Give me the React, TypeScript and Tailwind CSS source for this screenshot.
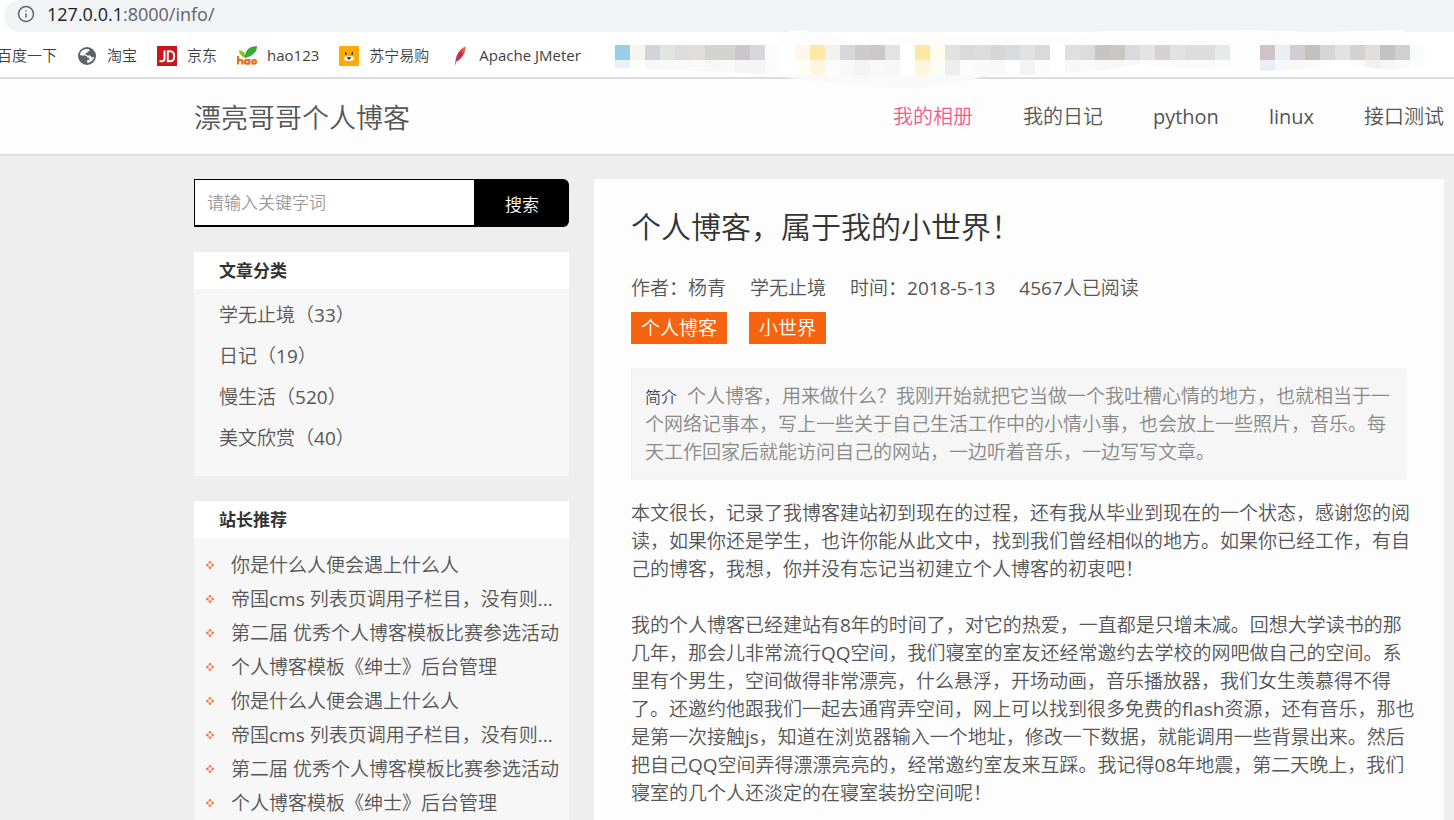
import React from 'react'
import { Info } from 'lucide-react'

interface Category {
  name: string
  count: number
}

const categories: Category[] = [
  { name: '学无止境', count: 33 },
  { name: '日记', count: 19 },
  { name: '慢生活', count: 520 },
  { name: '美文欣赏', count: 40 },
]

const titles = [
  '你是什么人便会遇上什么人',
  '帝国cms 列表页调用子栏目，没有则...',
  '第二届 优秀个人博客模板比赛参选活动',
  '个人博客模板《绅士》后台管理',
]
const recommended = [...titles, ...titles]

const navItems = ['我的相册', '我的日记', 'python', 'linux', '接口测试']

const paragraphs = [
  '本文很长，记录了我博客建站初到现在的过程，还有我从毕业到现在的一个状态，感谢您的阅读，如果你还是学生，也许你能从此文中，找到我们曾经相似的地方。如果你已经工作，有自己的博客，我想，你并没有忘记当初建立个人博客的初衷吧！',
  '我的个人博客已经建站有8年的时间了，对它的热爱，一直都是只增未减。回想大学读书的那几年，那会儿非常流行QQ空间，我们寝室的室友还经常邀约去学校的网吧做自己的空间。系里有个男生，空间做得非常漂亮，什么悬浮，开场动画，音乐播放器，我们女生羡慕得不得了。还邀约他跟我们一起去通宵弄空间，网上可以找到很多免费的flash资源，还有音乐，那也是第一次接触js，知道在浏览器输入一个地址，修改一下数据，就能调用一些背景出来。然后把自己QQ空间弄得漂漂亮亮的，经常邀约室友来互踩。我记得08年地震，第二天晚上，我们寝室的几个人还淡定的在寝室装扮空间呢！',
]

// top and bottom row of the pixelated bookmarks, one entry for each 15px block
const mosaicTop = [
  '#9acde6', '#f8f5f1', '#d3d4d9', '#e1e4e3', '#dcdcdc', '#dfdedc', '#d3d3d2', '#d3d3d1', '#c9c7ca', '#d7d8da', '#fcfcfc',
  '#ffffff', '#fff8e6', '#fde8a6', '#f2f2ee', '#d7d8db', '#cccccd', '#cac8c9', '#e3e3e4', '#ffffff', '#fde7a1', '#fefced',
  '#e1e1df', '#dadada', '#dcdcdc', '#d6d6d6', '#d9dadc', '#e1e1e1', '#dadada', '#ffffff', '#e0e0e0', '#dcdcdc', '#c6c5c3',
  '#c8c7c6', '#d9dae0', '#e4e4e4', '#d4d3d0', '#e2e2e2', '#dddddd', '#dddddd', '#e8eae9', '#fdfdfd', '#ffffff', '#d1c2c8',
  '#e9eef7', '#d1ced3', '#c1c1c1', '#d3d6d5', '#e2e2e2', '#d2d2d3', '#dfdedc', '#c2c2c4', '#d0d0d0', '#fafcfb',
]
const mosaicBottom = [
  '#e4f2fb', '#ffffff', '#f7f7f7', '#f9f9f9', '#f9f9f9', '#fafafa', '#f7f7f7', '#f8f8f8', '#f5f5f5', '#f5f5f5', '#fbfbfb',
  '#ffffff', '#fffdf7', '#fef6df', '#fcfcfc', '#f8f8f8', '#f3f3f4', '#f8f8f8', '#f7f7f7', '#ffffff', '#fef6de', '#fefdf5',
  '#eeeeee', '#fcfcfc', '#f9f9f9', '#f8f8f8', '#fdfdfd', '#f3f3f3', '#fbfbfb', '#ffffff', '#f7f7f7', '#fafafa', '#f7f7f7',
  '#f7f7f7', '#f8f8f8', '#fcfcfc', '#fbfbfb', '#fafafa', '#fafafa', '#fafafa', '#fcfcfc', '#fdfdfd', '#ffffff', '#e9edf7',
  '#f4f9fe', '#f7f7f7', '#fafafa', '#fdfdfd', '#fdfdfd', '#fbfbfb', '#f1f1f1', '#f5f5f5', '#f9f9f9', '#fdfdfd',
]

const Mosaic = () => (
  <svg width="840" height="60" viewBox="0 0 840 60" className="shrink-0 overflow-visible" aria-hidden="true">
    <defs>
      <clipPath id="mosaic-edge">
        <path d="M0 13H840V36L795 36L770 38L740 33L720 31L695 37L655 39L630 38L600 36L560 36L525 32L490 38L450 41L435 43H165L110 40L0 36Z" />
      </clipPath>
    </defs>
    <path d="M150 43L210 50L250 54L300 57L340 51L376 43Z" fill="#f9f9f9" />
    <path d="M165 13L166 4L175 -1L186 -2L205 2L235 8L290 4L380 3L450 3L490 -1L640 -2L700 0L788 -2L800 13Z" fill="#fdfdfd" />
    <g clipPath="url(#mosaic-edge)" shapeRendering="crispEdges">
      {mosaicTop.map((color, index) => (
        <rect key={index} x={index * 15} y="13" width="15" height="15" fill={color} />
      ))}
      {mosaicBottom.map((color, index) => (
        <rect key={index} x={index * 15} y="28" width="15" height="15" fill={color} />
      ))}
    </g>
  </svg>
)

const GlobeIcon = () => (
  <svg width="20" height="20" viewBox="0 0 20 20" aria-hidden="true">
    <circle cx="10" cy="10" r="9" fill="#5f6368" />
    <path d="M9.600 3C5.500 3.200 3 6.200 3 9.200L6.500 9.600H8.500Q10.500 9.800 10.500 11.800H12.200V14H10.200V16.800C13 17 16.800 14.500 17 10.800L14.800 11.600L13 9.600H10.500L8.600 8.600V6.800H10.600V5.200H12.400V3.600Z" fill="#fff" />
  </svg>
)

const JdIcon = () => (
  <svg width="20" height="20" viewBox="0 0 20 20" aria-hidden="true">
    <path d="M0 0H20V20H0Z" fill="#c8161d" />
    <path d="M7.500 4.500V12.500Q7.500 15.200 4.800 15.200H2.500M10.800 5.200V15.200H13Q17.200 15.200 17.200 10.200Q17.200 5.200 13 5.200Z" fill="none" stroke="#fff" strokeWidth="2" />
  </svg>
)

const HaoIcon = () => (
  <svg width="20" height="20" viewBox="0 0 20 20" aria-hidden="true">
    <path d="M9 12Q2 10 2 4Q9 5 9 12Z" fill="#8cc220" />
    <path d="M8 12Q7 1 20 0Q20 9 8 12Z" fill="#39a935" />
    <path d="M1 10V18.500M1 15Q3.200 12.800 5.400 15V18.500M12.400 13V18.500M12.400 14H9.500Q7.800 14 7.800 15.800Q7.800 17.600 9.500 17.600H12.400M16.800 14H17.400Q19 14 19 15.800Q19 17.600 17.400 17.600H16.800Q15.200 17.600 15.200 15.800Q15.200 14 16.800 14" fill="none" stroke="#ea6a1e" strokeWidth="2.2" />
  </svg>
)

const SuningIcon = () => (
  <svg width="20" height="20" viewBox="0 0 20 20" aria-hidden="true">
    <path d="M0 0H20V20H0Z" fill="#ffaa00" />
    <path d="M6 5.500L8.400 8.600H6ZM14 5.500L11.600 8.600H14Z" fill="#222" />
    <path d="M5 12.500Q5 10 8 10.200H12Q15 10 15 12.500Q15 15 10 15Q5 15 5 12.500Z" fill="#fff" />
    <path d="M7.500 11.200H12.500L10 14Z" fill="#222" />
  </svg>
)

const FeatherIcon = () => (
  <svg width="20" height="20" viewBox="0 0 20 20" aria-hidden="true">
    <defs>
      <linearGradient id="feather" x1="1" y1="0" x2="0" y2="1">
        <stop offset="0" stopColor="#f69923" />
        <stop offset="0.45" stopColor="#d22148" />
        <stop offset="1" stopColor="#8a5cab" />
      </linearGradient>
    </defs>
    <path d="M16.500 0Q17.500 4 14 9.500Q10 15 7.500 15.500L6 20L6.500 14Q8 5 16.500 0Z" fill="url(#feather)" />
  </svg>
)

const bookmarks = [
  { name: '淘宝', icon: <GlobeIcon /> },
  { name: '京东', icon: <JdIcon /> },
  { name: 'hao123', icon: <HaoIcon /> },
  { name: '苏宁易购', icon: <SuningIcon /> },
  { name: 'Apache JMeter', icon: <FeatherIcon /> },
]

const BrowserBar = () => (
  <div className="relative z-10 border-b-2 border-[#dadce0] bg-white">
    <div className="ml-1 flex h-8 items-center gap-3 rounded-bl-2xl rounded-tl-2xl bg-[#f1f3f4] pb-1 pl-[13px] text-lg">
      <Info size={18} color="#5f6368" />
      <span className="text-[#5f6368]">
        <span className="text-[#202124]">127.0.0.1</span>:8000/info/
      </span>
    </div>
    <div className="flex h-[45px] overflow-x-clip whitespace-nowrap text-[15px] text-[#3c4043]">
      <div className="-ml-[3px] flex shrink-0 items-center gap-5 pt-0.5">
        <a href="#baidu">百度一下</a>
        {bookmarks.map((bookmark) => (
          <a key={bookmark.name} href="#bookmark" className="flex items-center gap-2.5">
            {bookmark.icon}
            {bookmark.name}
          </a>
        ))}
      </div>
      <div className="ml-[34px]">
        <Mosaic />
      </div>
    </div>
  </div>
)

const Header = () => (
  <header className="flex h-[76px] items-center justify-between border-b border-[#d9d9d9] bg-[#fdfdfd] pl-[194px] pr-2.5 shadow-2xs">
    <h1 className="pt-1 text-[27px] text-[#555]">漂亮哥哥个人博客</h1>
    <nav className="flex gap-[50px] text-xl text-[#555]">
      {navItems.map((item, index) => (
        <a key={item} href="#nav" className={index === 0 ? 'text-[#f65a8a]' : ''}>
          {item}
        </a>
      ))}
    </nav>
  </header>
)

const Panel = ({ title, children }: { title: string; children: React.ReactNode }) => (
  <section className="bg-[#f7f7f7]">
    <h2 className="bg-white px-[25px] font-['Open_Sans','Noto_Sans_CJK_SC',sans-serif] text-[17px] font-bold leading-[37px] text-[#333]">
      {title}
    </h2>
    {children}
  </section>
)

const Bullet = () => (
  <svg width="8" height="8" viewBox="0 0 8 8" className="shrink-0" shapeRendering="crispEdges" aria-hidden="true">
    <path d="M3 0h2v2h-2zM3 6h2v2h-2zM0 3h2v2h-2zM6 3h2v2h-2z" fill="#fb8158" />
    <path d="M2 1h1v1h3v1h-1v-2h1v1h1v1h-1v2h1v1h-1v1h-1v-1h-2v1h-1v-1h-1v-1h1v-2h-1v-1h1z" fill="#fdb8a0" />
    <path d="M3 3h2v2h-2z" fill="#fff" />
  </svg>
)

const Sidebar = () => (
  <aside className="flex w-[375px] shrink-0 flex-col gap-[25px]">
    <form className="flex h-12 text-[17px]">
      <input
        type="text"
        aria-label="请输入关键字词"
        placeholder="请输入关键字词"
        className="min-w-0 flex-1 border border-b-2 border-black bg-white px-3 placeholder:text-[#999]"
      />
      <button type="button" className="w-[94px] rounded-r-md bg-black pt-1 text-white">
        搜索
      </button>
    </form>
    <Panel title="文章分类">
      <ul className="px-[25px] pb-[17px] pt-1.5 text-[19px] leading-[41px] text-[#555]">
        {categories.map((category) => (
          <li key={category.name}>
            <a href="#category">
              {category.name}（{category.count}）
            </a>
          </li>
        ))}
      </ul>
    </Panel>
    <Panel title="站长推荐">
      <ul className="pl-3 pt-2.5 text-[19px] leading-[34px] text-[#555]">
        {recommended.map((title, index) => (
          <li key={index} className="flex items-center gap-[17px] whitespace-nowrap">
            <Bullet />
            <a href="#article">{title}</a>
          </li>
        ))}
      </ul>
    </Panel>
  </aside>
)

const Article = () => (
  <article className="min-w-0 flex-1 bg-[#fdfdfd] px-[37px] pt-7 text-[19px] leading-7 text-[#555]">
    <h2 className="text-3xl leading-10 text-[#333]">个人博客，属于我的小世界！</h2>
    <div className="mt-[27px] flex gap-6">
      <span>作者：杨青</span>
      <a href="#category">学无止境</a>
      <span>时间：2018-5-13</span>
      <span>4567人已阅读</span>
    </div>
    <div className="mt-2.5 flex gap-[22px] leading-8 text-white">
      <a href="#tag" className="bg-[#f6640f] px-2.5">个人博客</a>
      <a href="#tag" className="bg-[#f6640f] px-2.5">小世界</a>
    </div>
    <p className="mt-6 border border-[#f1f1f1] bg-[#f6f6f6] px-[13px] py-[13px] text-[#888]">
      <span className="mr-2.5 text-base leading-none text-[#38485a]">简介</span>
      个人博客，用来做什么？我刚开始就把它当做一个我吐槽心情的地方，也就相当于一个网络记事本，写上一些关于自己生活工作中的小情小事，也会放上一些照片，音乐。每天工作回家后就能访问自己的网站，一边听着音乐，一边写写文章。
    </p>
    <div className="-mr-2.5 mt-[19px] flex flex-col gap-7">
      {paragraphs.map((text, index) => (
        <p key={index}>{text}</p>
      ))}
    </div>
  </article>
)

const App = () => (
  <div className="flex min-h-screen flex-col bg-[#eee] font-['Open_Sans','Noto_Sans_CJK_SC_DemiLight','Noto_Sans_CJK_SC',sans-serif]">
    <BrowserBar />
    <Header />
    <main className="flex flex-1 gap-[25px] pl-[194px] pr-2.5 pt-6">
      <Sidebar />
      <Article />
    </main>
  </div>
)

export default App
